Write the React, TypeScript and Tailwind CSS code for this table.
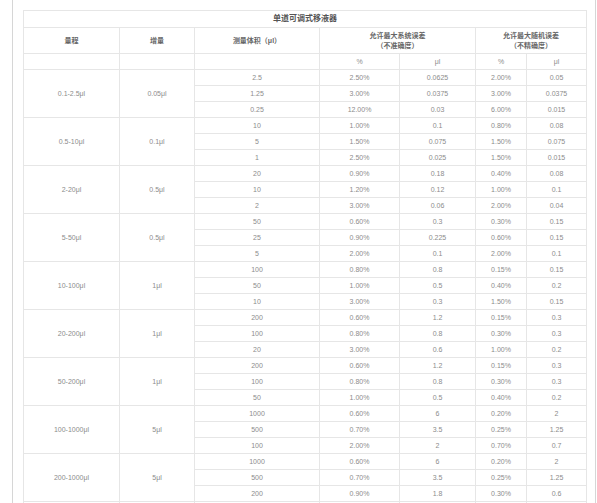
import React from 'react';

type Row = [string, string, string, string, string];

interface Group {
  range: string;
  step: string;
  rows: Row[];
}

const groups: Group[] = [
  {
    range: '0.1-2.5μl',
    step: '0.05μl',
    rows: [
      ['2.5', '2.50%', '0.0625', '2.00%', '0.05'],
      ['1.25', '3.00%', '0.0375', '3.00%', '0.0375'],
      ['0.25', '12.00%', '0.03', '6.00%', '0.015'],
    ],
  },
  {
    range: '0.5-10μl',
    step: '0.1μl',
    rows: [
      ['10', '1.00%', '0.1', '0.80%', '0.08'],
      ['5', '1.50%', '0.075', '1.50%', '0.075'],
      ['1', '2.50%', '0.025', '1.50%', '0.015'],
    ],
  },
  {
    range: '2-20μl',
    step: '0.5μl',
    rows: [
      ['20', '0.90%', '0.18', '0.40%', '0.08'],
      ['10', '1.20%', '0.12', '1.00%', '0.1'],
      ['2', '3.00%', '0.06', '2.00%', '0.04'],
    ],
  },
  {
    range: '5-50μl',
    step: '0.5μl',
    rows: [
      ['50', '0.60%', '0.3', '0.30%', '0.15'],
      ['25', '0.90%', '0.225', '0.60%', '0.15'],
      ['5', '2.00%', '0.1', '2.00%', '0.1'],
    ],
  },
  {
    range: '10-100μl',
    step: '1μl',
    rows: [
      ['100', '0.80%', '0.8', '0.15%', '0.15'],
      ['50', '1.00%', '0.5', '0.40%', '0.2'],
      ['10', '3.00%', '0.3', '1.50%', '0.15'],
    ],
  },
  {
    range: '20-200μl',
    step: '1μl',
    rows: [
      ['200', '0.60%', '1.2', '0.15%', '0.3'],
      ['100', '0.80%', '0.8', '0.30%', '0.3'],
      ['20', '3.00%', '0.6', '1.00%', '0.2'],
    ],
  },
  {
    range: '50-200μl',
    step: '1μl',
    rows: [
      ['200', '0.60%', '1.2', '0.15%', '0.3'],
      ['100', '0.80%', '0.8', '0.30%', '0.3'],
      ['50', '1.00%', '0.5', '0.40%', '0.2'],
    ],
  },
  {
    range: '100-1000μl',
    step: '5μl',
    rows: [
      ['1000', '0.60%', '6', '0.20%', '2'],
      ['500', '0.70%', '3.5', '0.25%', '1.25'],
      ['100', '2.00%', '2', '0.70%', '0.7'],
    ],
  },
  {
    range: '200-1000μl',
    step: '5μl',
    rows: [
      ['1000', '0.60%', '6', '0.20%', '2'],
      ['500', '0.70%', '3.5', '0.25%', '1.25'],
      ['200', '0.90%', '1.8', '0.30%', '0.6'],
    ],
  },
  // next group runs past the bottom edge, only its grid lines show
  {
    range: '',
    step: '',
    rows: [
      ['', '', '', '', ''],
      ['', '', '', '', ''],
      ['', '', '', '', ''],
    ],
  },
];

const cell = 'border border-[#e6e6e6] text-center align-middle p-0';

function App() {
  return (
    <div className="h-[503px] overflow-hidden bg-white">
      <div
        className="ml-[12px] w-[584px] h-full border-x border-[#d6d6d6] pl-[10px] pt-[10px]"
        style={{ fontFamily: '"Liberation Sans", "Noto Sans CJK SC", sans-serif' }}
      >
        <table className="table-fixed border-collapse w-[563px] text-[7px] leading-[10px] text-[#8c8c8c]">
          <colgroup>
            <col className="w-[96px]" />
            <col className="w-[75px]" />
            <col className="w-[125px]" />
            <col className="w-[80px]" />
            <col className="w-[76px]" />
            <col className="w-[51px]" />
            <col className="w-[60px]" />
          </colgroup>
          <thead>
            <tr className="h-[17px]">
              <th colSpan={7} className={`${cell} text-[8px] font-bold text-[#555]`}>
                单道可调式移液器
              </th>
            </tr>
            <tr className="h-[26px] text-[#666] font-semibold">
              <th className={cell}>量程</th>
              <th className={cell}>增量</th>
              <th className={cell}>测量体积（μl）</th>
              <th colSpan={2} className={cell}>
                允许最大系统误差
                <br />
                （不准确度）
              </th>
              <th colSpan={2} className={cell}>
                允许最大随机误差
                <br />
                （不精确度）
              </th>
            </tr>
            <tr className="h-[16px] font-normal">
              <td className={cell}></td>
              <td className={cell}></td>
              <td className={cell}></td>
              <td className={cell}>%</td>
              <td className={cell}>μl</td>
              <td className={cell}>%</td>
              <td className={cell}>μl</td>
            </tr>
          </thead>
          <tbody>
            {groups.map((g, gi) =>
              g.rows.map((r, i) => (
                <tr key={`${gi}-${i}`} className="h-[16px]">
                  {i === 0 && (
                    <>
                      <td rowSpan={3} className={cell}>
                        {g.range}
                      </td>
                      <td rowSpan={3} className={cell}>
                        {g.step}
                      </td>
                    </>
                  )}
                  {r.map((v, j) => (
                    <td key={j} className={cell}>
                      {v}
                    </td>
                  ))}
                </tr>
              ))
            )}
          </tbody>
        </table>
      </div>
    </div>
  );
}

export default App;
